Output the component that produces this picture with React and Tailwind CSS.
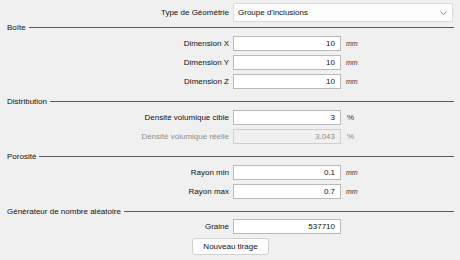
import React from 'react';

function Section({ title, className = '' }) {
  return (
    <div className={`flex items-center h-[11px] pl-[7px] pr-[6px] ${className}`}>
      <span className="whitespace-nowrap leading-none">{title}</span>
      <div className="flex-1 ml-[3px] border-t border-[#5c5c5c]" />
    </div>
  );
}

function Row({ label, value, unit, disabled, className = '' }) {
  return (
    <div className={`grid grid-cols-[229px_108px_auto] gap-x-[4px] items-center h-[15px] ${className}`}>
      <span className={`text-right whitespace-nowrap ${disabled ? 'text-[#8c8c8c]' : 'text-[#111]'}`}>{label}</span>
      <div
        className={`h-[15px] border flex items-center justify-end pr-[5px] ${
          disabled ? 'bg-[#f0f0f0] border-[#cfcfcf] text-[#8c8c8c]' : 'bg-white border-[#b9b9b9] text-[#111]'
        }`}
      >
        {value}
      </div>
      {unit === 'mm' ? (
        <span className="italic text-[7px] text-[#333] pl-[1px]">mm</span>
      ) : (
        <span className={`pl-[2px] ${disabled ? 'text-[#8c8c8c]' : 'text-[#333]'}`}>%</span>
      )}
    </div>
  );
}

export default function App() {
  return (
    <div className="w-[460px] h-[260px] bg-[#f0f0f0] overflow-hidden text-[8px] leading-none font-['Liberation_Sans',Arial,sans-serif] text-[#111]">
      <div className="grid grid-cols-[229px_220px] gap-x-[4px] items-center mt-[3px] h-[19px]">
        <span className="text-right whitespace-nowrap">Type de Géométrie</span>
        <div className="h-[19px] bg-[#fdfdfd] border border-[#dadada] rounded-[2px] flex items-center pl-[4px] pr-[5px]">
          <span className="flex-1">Groupe d'inclusions</span>
          <svg width="7" height="4" viewBox="0 0 7 4" className="mt-[1px]">
            <path d="M0.5 0.5 L3.5 3.5 L6.5 0.5" fill="none" stroke="#8a8a8a" strokeWidth="1" />
          </svg>
        </div>
      </div>

      <Section title="Boîte" />
      <Row label="Dimension X" value="10" unit="mm" className="mt-[3px]" />
      <Row label="Dimension Y" value="10" unit="mm" className="mt-[4px]" />
      <Row label="Dimension Z" value="10" unit="mm" className="mt-[4px]" />

      <Section title="Distribution" className="mt-[7px]" />
      <Row label="Densité volumique cible" value="3" unit="%" className="mt-[3px]" />
      <Row label="Densité volumique réelle" value="3.043" unit="%" disabled className="mt-[4px]" />

      <Section title="Porosité" className="mt-[7px]" />
      <Row label="Rayon min" value="0.1" unit="mm" className="mt-[3px]" />
      <Row label="Rayon max" value="0.7" unit="mm" className="mt-[4px]" />

      <Section title="Générateur de nombre aléatoire" className="mt-[7px]" />
      <div className="grid grid-cols-[229px_108px] gap-x-[4px] items-center h-[15px] mt-[2px]">
        <span className="text-right">Graine</span>
        <div className="h-[15px] bg-white border border-[#b9b9b9] flex items-center justify-end pr-[5px]">537710</div>
      </div>
      <div className="flex justify-center mt-[4px]">
        <button className="w-[77px] h-[17px] ml-[1px] bg-[#fdfdfd] border border-[#d0d0d0] rounded-[3px] text-[8px] leading-none">
          Nouveau tirage
        </button>
      </div>
    </div>
  );
}
